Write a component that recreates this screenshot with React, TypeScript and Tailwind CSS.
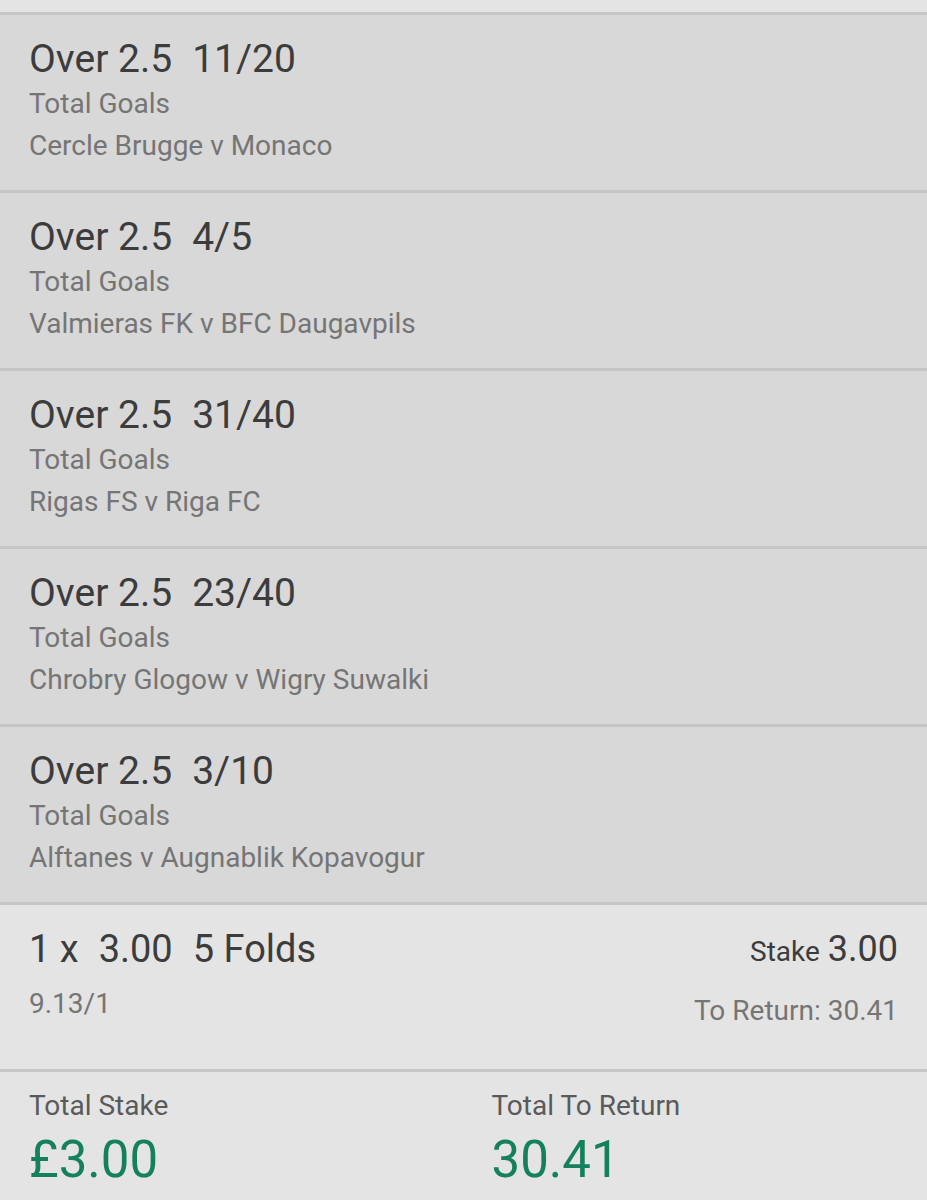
type Selection = { pick: string; odds: string; market: string; fixture: string };

const selections: Selection[] = [
  { pick: "Over 2.5", odds: "11/20", market: "Total Goals", fixture: "Cercle Brugge v Monaco" },
  { pick: "Over 2.5", odds: "4/5", market: "Total Goals", fixture: "Valmieras FK v BFC Daugavpils" },
  { pick: "Over 2.5", odds: "31/40", market: "Total Goals", fixture: "Rigas FS v Riga FC" },
  { pick: "Over 2.5", odds: "23/40", market: "Total Goals", fixture: "Chrobry Glogow v Wigry Suwalki" },
  { pick: "Over 2.5", odds: "3/10", market: "Total Goals", fixture: "Alftanes v Augnablik Kopavogur" },
];

function SelectionRow({ pick, odds, market, fixture }: Selection) {
  return (
    <li className="border-b-3 border-[#c6c6c6] px-[29px] pt-5 pb-[23px]">
      <h2 className="flex gap-5 text-[39px] leading-12 text-[#3c3c3c]">
        <span>{pick}</span>
        <span>{odds}</span>
      </h2>
      <p className="text-[28px] leading-[42px] text-[#757575]">{market}</p>
      <p className="text-[28px] leading-[42px] text-[#757575]">{fixture}</p>
    </li>
  );
}

export default function App() {
  return (
    <main className="min-h-screen bg-[#e4e4e4] pt-3 font-[Roboto,sans-serif]">
      <ul className="border-t-3 border-[#c6c6c6] bg-[#d8d8d8]">
        {selections.map((s) => (
          <SelectionRow key={s.fixture} {...s} />
        ))}
      </ul>
      <section className="flex justify-between border-b-3 border-[#c6c6c6] px-[29px] pt-5 pb-[37px]">
        <div>
          <h2 className="flex gap-5 text-[38px] leading-12 text-[#3c3c3c]">
            <span>1 x</span>
            <span>3.00</span>
            <span>5 Folds</span>
          </h2>
          <p className="pt-2.5 text-[28px] leading-[42px] text-[#757575]">9.13/1</p>
        </div>
        <div className="text-right">
          <p className="flex items-baseline justify-end gap-2 text-[36px] leading-12 text-[#3c3c3c]">
            <span className="text-[28px]">Stake</span>
            <span>3.00</span>
          </p>
          <p className="pt-3.5 text-[28px] leading-[42px] text-[#757575]">To Return: 30.41</p>
        </div>
      </section>
      <section className="grid grid-cols-2 px-[29px] pt-[13px]">
        <div>
          <p className="text-[28px] leading-[42px] text-[#5a5a5a]">Total Stake</p>
          <p className="text-[51px] leading-[66px] text-[#14805e]">£3.00</p>
        </div>
        <div className="pl-7">
          <p className="text-[28px] leading-[42px] text-[#5a5a5a]">Total To Return</p>
          <p className="text-[51px] leading-[66px] text-[#14805e]">30.41</p>
        </div>
      </section>
    </main>
  );
}
